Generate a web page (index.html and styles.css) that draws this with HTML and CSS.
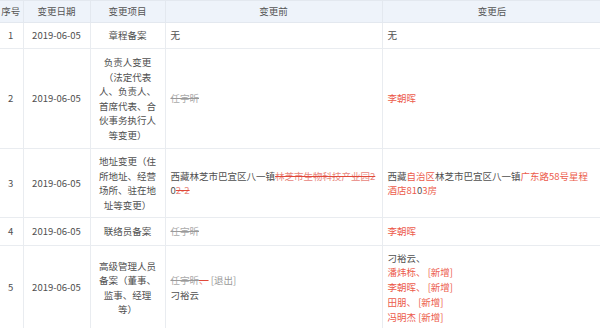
FILE: index.html
```html
<!DOCTYPE html>
<html lang="zh-CN">
<head>
<meta charset="utf-8">
<link rel="stylesheet" href="styles.css">
</head>
<body>
<table class="chg">
  <colgroup>
    <col class="c-no"><col class="c-date"><col class="c-item"><col class="c-before"><col class="c-after">
  </colgroup>
  <thead>
    <tr class="r-head">
      <th>序号</th><th>变更日期</th><th>变更项目</th><th>变更前</th><th>变更后</th>
    </tr>
  </thead>
  <tbody>
    <tr class="r1">
      <td class="center">1</td>
      <td class="center">2019-06-05</td>
      <td class="center">章程备案</td>
      <td>无</td>
      <td>无</td>
    </tr>
    <tr class="r2">
      <td class="center">2</td>
      <td class="center">2019-06-05</td>
      <td class="center">负责人变更<br>（法定代表<br>人、负责人、<br>首席代表、合<br>伙事务执行人<br>等变更）</td>
      <td><span class="del">任宇昕</span></td>
      <td><span class="add">李朝晖</span></td>
    </tr>
    <tr class="r3">
      <td class="center">3</td>
      <td class="center">2019-06-05</td>
      <td class="center">地址变更（住<br>所地址、经营<br>场所、驻在地<br>址等变更）</td>
      <td>西藏林芝市巴宜区八一镇<span class="del-red">林芝市生物科技产业园2</span><br>0<span class="del-red">2-2</span></td>
      <td>西藏<span class="add">自治区</span>林芝市巴宜区八一镇<span class="add">广东路58号星程</span><br><span class="add">酒店81</span>0<span class="add">3房</span></td>
    </tr>
    <tr class="r4">
      <td class="center">4</td>
      <td class="center">2019-06-05</td>
      <td class="center">联络员备案</td>
      <td><span class="del">任宇昕</span></td>
      <td><span class="add">李朝晖</span></td>
    </tr>
    <tr class="r5">
      <td class="center">5</td>
      <td class="center">2019-06-05</td>
      <td class="center">高级管理人员<br>备案（董事、<br>监事、经理<br>等）</td>
      <td><span class="del">任宇昕</span><span class="del-red">、</span> <span class="muted">[退出]</span><br>刁裕云</td>
      <td class="list">刁裕云、<br><span class="add">潘炜栎、 [新增]</span><br><span class="add">李朝晖、 [新增]</span><br><span class="add">田朋、 [新增]</span><br><span class="add">冯明杰 [新增]</span></td>
    </tr>
  </tbody>
</table>
</body>
</html>
```

FILE: styles.css
```css
html, body {
  margin: 0;
  padding: 0;
  background: #ffffff;
  overflow: hidden;
}

body {
  font-family: "Noto Sans CJK SC", "Noto Sans", sans-serif;
  font-size: 9.5px;
  line-height: 14.5px;
  color: #4f4f4f;
}

.chg {
  table-layout: fixed;
  border-collapse: collapse;
  width: 607px;
  margin-left: -5px;
}

.c-no { width: 28px; }
.c-date { width: 67px; }
.c-item { width: 75px; }
.c-before { width: 217px; }
.c-after { width: 220px; }

.chg th,
.chg td {
  border: 1px solid #e9ecf0;
  padding: 0 5px;
  vertical-align: middle;
  text-align: left;
  white-space: nowrap;
}

.chg th {
  background: #eef3fa;
  font-weight: normal;
  text-align: center;
  color: #555555;
  border-color: #e3e8ef;
}

.chg th:first-child,
.chg td:first-child {
  border-left: none;
  padding: 0 2px 0 6px;
}

.chg td.center {
  text-align: center;
  padding-left: 2px;
  padding-right: 2px;
}

.chg td:first-child.center {
  padding: 0 0 0 4px;
}

.chg td.list {
  line-height: 14.8px;
}

.r-head { height: 22px; }
.r1 { height: 26px; }
.r2 { height: 100px; }
.r3 { height: 69px; }
.r4 { height: 28px; }
.r5 { height: 84px; }

.del {
  color: #a9a9a9;
  text-decoration: line-through;
  text-decoration-color: #9a9a9a;
}

.del-red {
  color: #e8867c;
  text-decoration: line-through;
  text-decoration-color: #e0483a;
}

.add {
  color: #ec5b4b;
}

.muted {
  color: #999999;
}
```
